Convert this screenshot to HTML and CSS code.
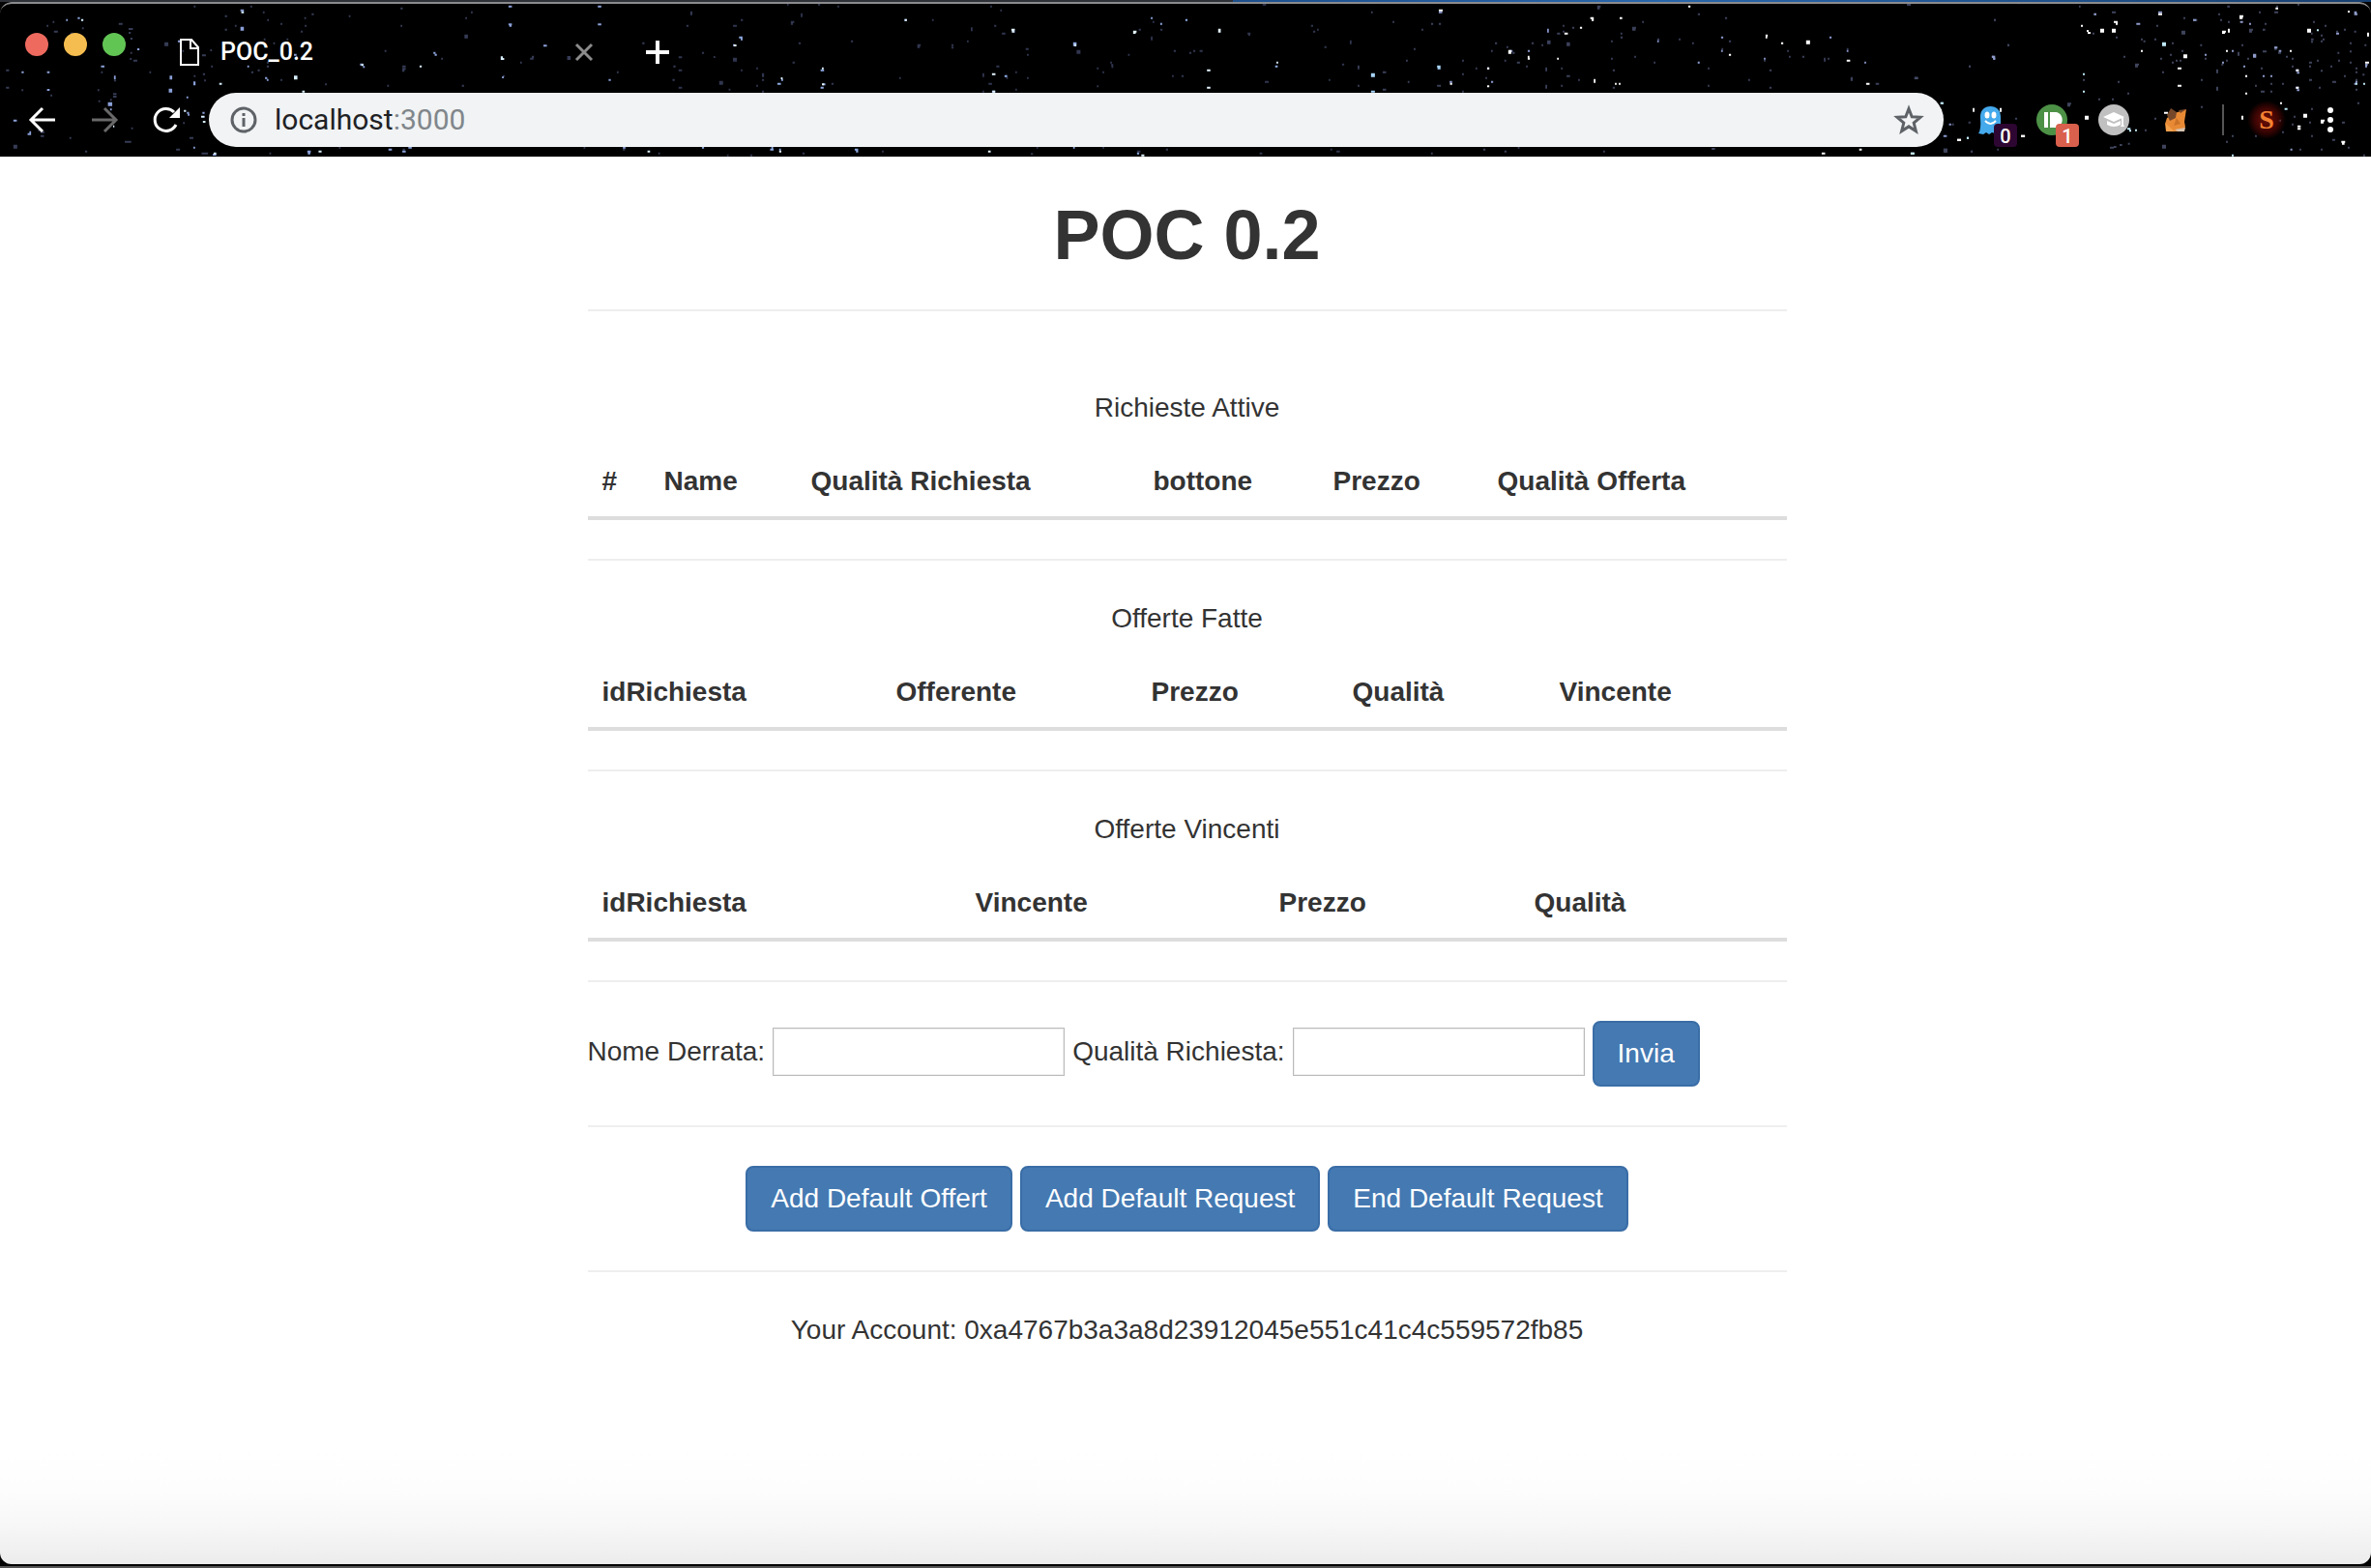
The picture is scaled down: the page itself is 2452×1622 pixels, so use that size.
FILE: index.html
```html
<!DOCTYPE html>
<html lang="it">
<head>
<meta charset="utf-8">
<meta name="viewport" content="width=device-width, initial-scale=1">
<title>POC_0.2</title>
<link rel="stylesheet" href="styles.css">
</head>
<body>
<div class="window">
  <header class="chrome">
    <svg class="stars" width="2452" height="162" viewBox="0 0 2452 162" aria-hidden="true" fill="none">
      <!-- left third of the starfield -->
      <g transform="scale(.4464 .3333)" stroke-width="6">
        <path stroke="#363c56" d="M108 80h4M122 68h4M125 98h9M163 104h7M163 113h4M190 88h4M275 74h9M298 90h10M298 102h5M302 120h5M302 164h4M381 134h9M381 140h9M449 20h4M422 158h4M301 183h4M309 188h9M14 218h7M14 272h7M50 280h4M117 296h4M226 280h4M234 224h4M264 250h5M262 292h8M262 300h8M346 224h4M228 314h4M255 310h4M468 172h9M473 250h4M487 156h4M521 50h5M521 92h5M544 80h4M580 20h4M609 38h4M611 122h4M619 62h4M633 134h4M650 74h4M664 122h4M697 98h4M705 56h4M722 44h5M706 80h4M618 194h5M618 206h5M582 224h5M597 218h5M650 248h4M753 262h4M808 50h4M928 26h5M928 80h4M891 158h4M897 266h4M1076 110h8M1076 116h8M1078 56h4M1091 38h4M1022 182h4M932 206h8M932 214h8M932 220h5M1205 194h4M1070 266h5M1314 177h8M1314 183h8M1429 224h4M1558 248h5M1228 182h8M1232 176h5M1560 206h5M1488 134h5M1165 236h4M31 452h9M31 458h9M88 404h4M94 410h9M94 422h8M161 428h4M197 470h5M289 440h15M304 398h4M439 428h9M408 464h9M467 476h15M424 382h4M449 236h4M470 230h5M489 206h4M624 476h4M785 458h4M933 464h5M1443 464h5M1525 476h4M1352 458h4"/>
        <path stroke="#8aa0d8" d="M153 62h4M180 56h5M318 153h5M109 224h6M50 224h5M109 279h6M234 206h8M264 238h4M264 243h4M31 374h8M64 416h8M68 410h4M393 238h6M393 244h6M391 278h8M391 284h8M448 256h5M448 262h5M432 302h4M412 128h5M557 32h8M557 86h8M557 92h8M681 170h6M685 178h4M614 242h5M618 248h4M573 206h4M1178 20h8M1178 76h8M1180 80h5M1385 20h8M1385 76h8M1004 164h5M1007 170h5M834 200h8M841 208h4M1163 240h4M1259 142h8M1410 248h5M250 320h10M250 326h10M255 340h4M433 350h5M435 356h4M469 350h5M448 458h4M493 480h8M712 470h8M713 476h6M900 464h8M932 470h8M946 458h8M1443 458h6"/>
        <path stroke="#d8efff" d="M188 62h5M559 38h6M508 260h6M681 238h8M681 244h8M837 202h5M972 206h5M1160 178h5M1160 183h8M700 284h6M426 344h5M466 362h8M470 378h6M738 470h7M495 476h6M1500 470h6M262 392h3"/>
      </g>
      <!-- centre -->
      <g transform="translate(700) scale(.4464 .3333)" stroke-width="6">
        <path stroke="#30364f" d="M31 38h5M31 44h5M22 80h5M130 80h9M148 62h5M130 182h9M130 188h9M148 116h4M148 122h4M58 164h5M4 178h8M4 218h8M4 272h8M85 177h4M98 254h9M98 260h9M148 218h4M184 212h4M197 230h5M197 236h5M197 248h5M197 284h5M184 266h4M120 278h4M264 68h8M264 74h5M287 50h4M287 44h4M327 14h5M372 20h4M255 14h4M282 134h5M268 194h5M358 260h5M515 242h4M403 128h5M557 140h8M557 146h6M636 140h5M636 148h5M591 62h4M681 88h4M681 94h4M672 128h4M726 20h4M735 80h5M749 32h4M753 104h8M808 152h7M811 170h4M811 242h4M784 224h4M784 278h4M708 230h4M708 236h4M740 206h7M722 260h8M708 284h4M761 236h5M763 242h4M926 158h9M926 164h9M1004 194h4M1006 202h5M1007 208h4M986 224h4M973 212h4M973 268h4M1045 170h4M1098 116h4M1098 122h4M1102 68h4M1120 74h4M1120 92h5M1070 92h5M1151 158h5M1187 164h5M1196 158h5M1211 158h7M1147 236h4M1169 236h5M1322 104h7M1324 108h4M1469 80h5M1474 98h5M1483 92h4M1500 146h5M1541 200h5M1510 248h4M1362 254h9M1559 128h4M1559 134h4M1357 14h8M170 482h5M116 482h4M291 476h5M475 470h4M820 478h5M833 458h4M986 458h4M1066 470h8M1133 464h5M1514 464h4M1528 470h8M1350 476h6"/>
        <path stroke="#8da9df" d="M144 116h8M148 122h4M130 140h4M527 62h5M233 260h8M242 248h4M333 218h8M333 272h7M338 262h6M779 98h4M918 134h8M918 140h8M1098 56h4M1178 62h5M1120 74h4M1386 206h6M759 236h6M730 284h8M216 464h8M219 458h4M58 458h5M412 464h8M415 470h5M237 464h4M918 458h4M1066 476h5"/>
        <path stroke="#e4f5ff" d="M132 141h6M528 62h5M241 243h4M336 212h4M336 262h5M775 92h8M776 98h5M730 230h8M731 284h6M1057 98h8M1057 102h6M1254 92h6M1254 98h6M1228 218h8M1228 272h8M1389 194h4M921 140h4M237 470h5M721 470h6M1076 482h7"/>
      </g>
      <!-- right of centre -->
      <g transform="translate(1400) scale(.4464 .3333)" stroke-width="6">
        <path stroke="#3b405a" d="M40 38h4M90 68h4M157 92h4M179 74h5M197 74h5M139 152h4M121 188h4M9 206h4M9 212h4M67 224h8M125 254h4M9 266h4M67 278h8M193 266h9M251 188h4M251 230h4M282 212h4M251 284h4M305 242h4M318 158h4M327 134h5M349 188h4M354 146h4M367 164h6M378 194h7M399 206h4M412 134h5M435 140h4M448 128h8M448 134h8M471 104h7M484 80h4M484 98h4M493 134h8M493 140h8M506 86h5M444 212h4M444 218h4M444 266h4M444 272h4M480 212h4M480 266h4M493 236h8M520 248h4M564 20h8M564 26h6M600 218h5M600 272h5M596 182h4M596 128h4M618 116h5M618 104h4M645 86h9M645 92h8M668 68h4M650 176h4M703 122h5M695 194h4M753 122h4M784 134h4M797 44h5M860 56h5M869 128h5M852 152h4M797 194h5M820 212h4M820 266h4M950 188h4M963 218h5M963 272h5M914 248h4M1004 158h4M1008 176h4M1039 176h5M1089 182h4M1089 188h4M1098 182h4M1142 152h4M1151 242h5M1151 248h5M1209 260h8M1282 14h8M1514 140h5M1425 206h4M1483 62h4M1424 380h5M1366 464h9M1366 470h9M1429 470h5M380 458h4M349 470h5M300 464h5M578 470h4M179 476h4M829 462h8M1532 368h5"/>
        <path stroke="#8997cb" d="M448 92h4M448 98h4M197 38h8M361 158h7M403 158h5M703 128h4M851 116h5M1102 116h5M1142 158h4M851 158h4M797 194h4M950 182h4M1183 194h4M1299 242h8M1478 176h8M1481 182h5M1366 422h8M1379 386h5M309 212h5M222 254h6M318 254h5"/>
        <path stroke="#fff" d="M197 32h9M548 56h8M551 62h5M616 56h6M775 20h5M488 104h8M524 86h5M358 158h7M358 164h7M403 176h4M403 182h5M309 212h5M309 268h5M556 248h4M556 254h4M605 260h4M614 260h4M954 110h5M954 116h4M990 134h5M1048 128h9M1048 134h9M869 170h5M1142 188h8M1187 260h8M223 260h5M471 182h4M1434 338h4M1434 344h4M1398 434h9M1546 422h9M1171 464h6M1290 476h8M1084 476h8"/>
        <path stroke="#a9d5f8" d="M40 230h9M40 236h9M193 206h8M194 212h7M40 284h9M1361 320h5M1420 428h5"/>
      </g>
      <!-- far right -->
      <g transform="translate(1940) scale(.3333)" stroke-width="6">
        <path stroke="#3f445c" d="M630 20h5M732 38h12M678 44h6M672 104h6M744 116h6M768 176h6M822 122h6M830 128h6M870 80h6M864 122h6M948 98h12M948 104h12M954 56h6M985 62h12M1062 44h6M1068 62h6M1092 68h6M1090 20h8M1188 38h6M1206 74h6M1158 92h12M1158 98h9M1200 92h8M1236 38h12M1242 20h6M1308 14h6M1356 68h6M1392 80h6M1428 98h6M1386 122h6M1380 128h6M1470 134h6M1470 160h6M1380 110h6M1350 122h8M1350 130h6M1350 104h5M1432 164h6M1452 92h6M1484 98h6M1516 140h6M918 134h6M948 158h6M912 170h6M882 182h6M888 224h6M804 200h12M804 206h9M918 194h6M930 188h6M942 188h6M1006 140h6M1008 248h6M1020 182h6M1056 218h6M1056 224h6M1056 272h6M1056 278h6M1072 200h6M1086 188h6M1122 164h6M1122 170h6M1134 140h6M1152 182h6M1200 160h12M1236 146h8M1236 152h8M1248 164h9M1272 176h6M1290 182h6M1290 206h6M1194 212h6M1176 266h6M1224 260h6M1194 284h12M1224 284h6M1146 236h6M1260 260h6M1344 194h9M1344 206h6M1344 248h9M1368 188h6M1380 220h6M1410 206h6M1374 272h6M1434 188h6M1452 236h6M1416 254h12M1470 194h6M1488 212h6M1488 224h6M1488 248h6M1488 278h6M1510 232h6M750 254h6M780 290h6M732 308h6M642 248h6M594 322h12M594 328h9M690 308h6M888 452h12M888 458h12M726 458h12M738 456h8M756 450h8M782 446h6M864 368h6M834 404h6M1008 332h6M1104 422h6M1086 440h6M1176 422h6M1260 410h6M1290 386h6M1296 362h6M1344 380h6M1350 422h6M1416 434h9M1446 380h9M1494 320h6M1464 458h6M1380 464h6M1512 482h6M1314 464h6M1350 338h6M408 140h6M366 62h6M288 206h6M96 14h12M120 242h9M210 464h12M210 470h12M295 470h5M236 386h6M440 10h5M376 464h5"/>
        <path stroke="#8f9cca" d="M360 176h8M364 182h6M676 44h8M876 38h12M808 74h12M984 62h10M1130 68h9M1158 74h6M1170 170h10M1170 176h10M1236 148h10M1104 158h6M1020 170h6M1074 194h6M1140 206h6M1200 236h6M1250 158h8M1302 218h10M1306 226h8M1302 272h10M1306 280h8M1488 254h6M1484 44h10M1484 38h8M1484 260h6M1224 236h6M1248 374h9M1286 464h6M1518 200h8M1518 206h6M1428 104h9"/>
        <path stroke="#fff" d="M738 68h12M744 74h6M732 92h12M732 98h12M654 96h6M657 102h9M696 92h12M696 98h12M636 80h6M876 44h12M1128 50h12M1128 56h10M1074 98h12M1074 102h9M1092 92h6M1092 98h6M1338 92h12M1338 98h12M1240 26h8M1464 36h6M1524 104h6M1524 110h6M954 172h12M954 178h12M822 158h6M936 212h12M936 266h12M1086 158h6M1146 236h6M1146 290h6M1284 158h6M1304 218h8M1304 272h8M1518 194h12M1326 356h12M1326 362h12M1308 392h10M1308 400h10M1380 374h12M1380 380h9M1444 440h12M1446 446h8M1254 320h6M1134 362h6M1134 368h6M894 350h12M930 404h6M648 362h12M648 368h12M450 422h12M384 338h6M384 344h6M252 434h12M565 8h10M1476 8h12"/>
        <path stroke="#bfe9f6" d="M888 134h12M888 140h12M642 230h6M642 284h6M1368 94h6M1488 260h6M1512 260h6M780 400h10M786 406h6M804 404h6M1268 338h9M200 320h9M282 428h6M108 476h12M1104 482h6"/>
      </g>
    </svg>

    <div class="tab-strip">
      <div class="lights" aria-hidden="true">
        <span class="light light-close"></span>
        <span class="light light-min"></span>
        <span class="light light-max"></span>
      </div>
      <div class="tab">
        <svg width="24" height="32" viewBox="0 0 24 32" fill="none" stroke="#fff" stroke-width="2" aria-hidden="true"><path d="M3 3h11l7 8v18H3zM13 3v9h8"/></svg>
        <span class="tab-title">POC_0.2</span>
        <button class="icon-button" type="button" aria-label="Close tab">
          <svg width="20" height="20" viewBox="0 0 20 20" stroke="#8c8c8c" stroke-width="3"><path d="M2 2l16 16M18 2L2 18"/></svg>
        </button>
      </div>
      <button class="icon-button" type="button" aria-label="New tab">
        <svg width="24" height="24" viewBox="0 0 24 24" stroke="#fff" stroke-width="4"><path d="M12 0v24M0 12h24"/></svg>
      </button>
    </div>

    <div class="toolbar">
      <nav class="nav-buttons">
        <button class="icon-button" type="button" aria-label="Back">
          <svg width="32" height="32" viewBox="0 0 32 32" fill="none" stroke="#fff" stroke-width="3"><path d="M29 16H5M16 4L4 16l12 12"/></svg>
        </button>
        <button class="icon-button" type="button" aria-label="Forward">
          <svg width="32" height="32" viewBox="0 0 32 32" fill="none" stroke="#696969" stroke-width="3"><path d="M3 16h24M16 4l12 12-12 12"/></svg>
        </button>
        <button class="icon-button" type="button" aria-label="Reload">
          <svg width="32" height="32" viewBox="0 0 32 32" fill="none" stroke="#fff" stroke-width="3"><path d="M26 21A11.500 11.500 0 1 1 24 8"/><path fill="#fff" stroke="none" d="M30 3v11H19z"/></svg>
        </button>
      </nav>
      <div class="address-bar">
        <svg width="28" height="28" viewBox="0 0 28 28" fill="none" stroke="#5f6368" stroke-width="3" aria-hidden="true"><circle cx="14" cy="14" r="12"/><path d="M14 12v9M14 7v3"/></svg>
        <div class="address" role="textbox" aria-label="Address">localhost<span class="port">:3000</span></div>
        <button class="icon-button" type="button" aria-label="Bookmark">
          <svg width="32" height="32" viewBox="0 0 32 32" fill="none" stroke="#5f6368" stroke-width="3"><path d="M16 4.500l3.200 8.200 8.800.6-6.800 5.700 2.200 8.600L16 22.900l-7.400 4.700 2.200-8.600L4 13.300l8.800-.6z"/></svg>
        </button>
      </div>
      <div class="extensions">
        <button class="icon-button" type="button" aria-label="Ghostery">
          <svg width="32" height="32" viewBox="0 0 32 32"><path fill="#45aaec" d="M6 13C6 6 10 2 16.500 2S27 6 27 13v17l-3-1-3 1-3-1-3 2-3-2-3 2-5-1q3-4 2-16z"/><g fill="#fff"><ellipse cx="13" cy="11" rx="2.500" ry="3.500"/><ellipse cx="20" cy="11" rx="2.500" ry="3.500"/></g><path d="M11 17q5.500 6 11 0" fill="none" stroke="#fff" stroke-width="2"/></svg>
          <span class="badge badge-purple">0</span>
        </button>
        <button class="icon-button" type="button" aria-label="Pushbullet">
          <svg width="32" height="32" viewBox="0 0 32 32"><circle cx="16" cy="16" r="16" fill="#4d9147"/><path fill="#fff" d="M8 8h4v16H8zM14 8h6c9 1 9 15 0 16h-6z"/></svg>
          <span class="badge badge-red">1</span>
        </button>
        <button class="icon-button" type="button" aria-label="Scholar">
          <svg width="32" height="32" viewBox="0 0 32 32"><circle cx="16" cy="16" r="16" fill="#c0c0c0"/><path fill="#fff" d="M5 13l11-5 11 5-11 5zM9 17l7 3 7-3v4q-7 4-14 0zM24 13h2v8l1 2h-4l1-2z"/></svg>
        </button>
        <button class="icon-button" type="button" aria-label="MetaMask">
          <svg width="32" height="32" viewBox="0 0 32 32"><path fill="#e88a35" d="M7 14l8-5 12-4-2 13 1 5-2 5H6l-1-8z"/><path fill="#76482a" d="M11 4l6 4-1 6-6 3-3-6zM19 6l8-1-6 4z"/><path fill="#cb7227" d="M17 14l4 6-7 2z"/><path fill="#f5a04b" d="M6 20l9 8H6z"/><path fill="#d8c2ad" d="M15 26l11-2-1 4h-7z"/></svg>
        </button>
        <span class="divider"></span>
        <button class="profile" type="button" aria-label="Profile">S</button>
        <button class="icon-button" type="button" aria-label="Menu">
          <svg width="32" height="32" viewBox="0 0 32 32" fill="#fff"><circle cx="16" cy="6" r="3"/><circle cx="16" cy="16" r="3"/><circle cx="16" cy="26" r="3"/></svg>
        </button>
      </div>
    </div>
  </header>

  <main class="page">
    <div class="container">
      <h1>POC 0.2</h1>
      <hr>
      <section class="first-section">
        <p id="active">Richieste Attive</p>
        <table aria-labelledby="active">
          <colgroup><col class="w-64"><col class="w-152"><col class="w-354"><col class="w-186"><col class="w-170"><col></colgroup>
          <thead><tr><th>#</th><th>Name</th><th>Qualità Richiesta</th><th>bottone</th><th>Prezzo</th><th>Qualità Offerta</th></tr></thead>
          <tbody></tbody>
        </table>
      </section>
      <hr>
      <section>
        <p id="made">Offerte Fatte</p>
        <table aria-labelledby="made">
          <colgroup><col class="w-304"><col class="w-264"><col class="w-208"><col class="w-214"><col></colgroup>
          <thead><tr><th>idRichiesta</th><th>Offerente</th><th>Prezzo</th><th>Qualità</th><th>Vincente</th></tr></thead>
          <tbody></tbody>
        </table>
      </section>
      <hr>
      <section>
        <p id="winning">Offerte Vincenti</p>
        <table aria-labelledby="winning">
          <colgroup><col class="w-386"><col class="w-314"><col class="w-264"><col></colgroup>
          <thead><tr><th>idRichiesta</th><th>Vincente</th><th>Prezzo</th><th>Qualità</th></tr></thead>
          <tbody></tbody>
        </table>
      </section>
      <hr>
      <form class="request-form">
        <label for="nome">Nome Derrata:</label>
        <input id="nome" type="text">
        <label for="qualita">Qualità Richiesta:</label>
        <input id="qualita" type="text">
        <button class="btn" type="button">Invia</button>
      </form>
      <hr>
      <div class="actions">
        <button class="btn" type="button">Add Default Offert</button>
        <button class="btn" type="button">Add Default Request</button>
        <button class="btn" type="button">End Default Request</button>
      </div>
      <hr>
      <p>Your Account: 0xa4767b3a3a8d23912045e551c41c4c559572fb85</p>
    </div>
  </main>
</div>
</body>
</html>
```
FILE: styles.css
```css
* {
  box-sizing: border-box;
}

body {
  margin: 0;
  min-height: 100vh;
  display: flex;
  flex-direction: column;
  padding: 2px 0 4px;
  background:
    linear-gradient(#555, #555) bottom / 100% 2px no-repeat,
    linear-gradient(90deg, #2e3138 52%, #1d4f8c 52%, #2866ab 70%, #173f70) top / 100% 2px no-repeat,
    #050404;
  color: #333;
  font: 28px/40px "Liberation Sans", Arial, sans-serif;
}

.window {
  flex: 1;
  display: flex;
  flex-direction: column;
  border-radius: 12px;
  overflow: hidden;
}

/* Browser chrome */

.chrome {
  position: relative;
  border-top: 2px solid #8b8b8d;
  border-radius: 12px 12px 0 0;
  padding-bottom: 10px;
  background: #000;
  overflow: hidden;
}

.stars {
  position: absolute;
  top: -4px;
  left: 0;
}

.icon-button {
  position: relative;
  display: flex;
  flex: none;
  border: 0;
  padding: 0;
  background: none;
}

.tab-strip {
  position: relative;
  display: flex;
  align-items: center;
  height: 92px;
  padding: 8px 26px 0;
}

.lights {
  display: flex;
  gap: 16px;
  margin: 0 54px 16px 0;
}

.light {
  width: 24px;
  height: 24px;
  border-radius: 50%;
}

.light-close {
  background: #ee6a5f;
}

.light-min {
  background: #f5bd4f;
}

.light-max {
  background: #61c554;
}

.tab {
  display: flex;
  align-items: center;
  width: 430px;
  margin-right: 54px;
}

.tab-title {
  flex: 1;
  margin-left: 20px;
  color: #fff;
  font: 500 25px/32px Roboto, sans-serif;
}

.toolbar {
  position: relative;
  display: flex;
  align-items: center;
  padding: 0 26px 0 28px;
}

.nav-buttons {
  display: flex;
  gap: 32px;
}

.address-bar {
  flex: 1;
  display: flex;
  align-items: center;
  height: 56px;
  margin: 0 32px 0 28px;
  border-radius: 28px;
  padding: 0 20px 0 22px;
  background: #f1f3f4;
}

.address {
  flex: 1;
  margin-left: 18px;
  color: #202124;
  font: 30px/40px Roboto, sans-serif;
}

.port {
  color: #80868b;
}

.extensions {
  display: flex;
  align-items: center;
  gap: 32px;
}

.badge {
  position: absolute;
  top: 20px;
  left: 20px;
  width: 24px;
  height: 24px;
  border-radius: 4px;
  color: #fff;
  font: 500 20px/26px Roboto, sans-serif;
  text-align: center;
}

.badge-purple {
  background: #2d0632;
}

.badge-red {
  background: #d9604c;
}

.divider {
  width: 2px;
  height: 32px;
  background: #555;
}

.profile {
  width: 40px;
  height: 40px;
  margin: 0 -2px 0 -8px;
  border: 0;
  padding: 0;
  background: radial-gradient(circle closest-side, #6e0f06, #3d0503 60%, transparent);
  color: #f58232;
  font: bold 28px/40px "Liberation Serif", serif;
}

/* Page */

.page {
  flex: 1;
  padding: 1px 0 40px 3px;
  background: linear-gradient(to top, #ececec, #f7f7f7 40px, #fdfdfd 76px, #fff 120px);
}

.container {
  max-width: 1240px;
  margin: 0 auto;
}

h1 {
  margin: 40px 0;
  font-size: 72px;
  font-weight: bold;
  line-height: 80px;
  text-align: center;
}

h1 + hr {
  margin-top: -3px;
}

hr {
  height: 2px;
  margin: 40px 0;
  border: 0;
  background: #eee;
}

.first-section {
  padding-top: 40px;
}

p {
  margin: 0;
  text-align: center;
}

table {
  width: 100%;
  margin-top: 20px;
  border-collapse: separate;
  border-spacing: 0;
  table-layout: fixed;
}

th {
  padding: 16px 15px;
  border-bottom: 4px solid #ddd;
  text-align: left;
  white-space: nowrap;
}

.w-64 { width: 64px; }
.w-152 { width: 152px; }
.w-170 { width: 170px; }
.w-186 { width: 186px; }
.w-208 { width: 208px; }
.w-214 { width: 214px; }
.w-264 { width: 264px; }
.w-304 { width: 304px; }
.w-314 { width: 314px; }
.w-354 { width: 354px; }
.w-386 { width: 386px; }

.request-form {
  display: flex;
  align-items: center;
  gap: 8px;
}

.request-form label,
.request-form input {
  margin-bottom: 4px;
}

.request-form input {
  width: 302px;
  height: 50px;
  border: 1px solid #bbb;
  padding: 2px 4px;
  background: #fff;
  box-shadow: inset 0 0 0 1px #eee;
  font: inherit;
}

.btn {
  border: 2px solid #3a6da6;
  border-radius: 8px;
  padding: 12px 24px;
  background: #4479b2;
  color: #fff;
  font: inherit;
  white-space: nowrap;
}

.actions {
  display: flex;
  justify-content: center;
  gap: 8px;
}
```
